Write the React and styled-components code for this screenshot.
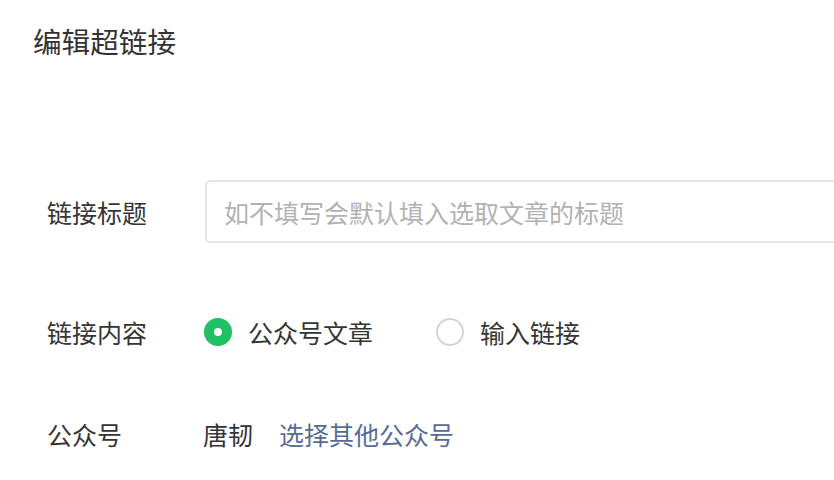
import React from 'react';
import styled, { createGlobalStyle } from 'styled-components';

const GlobalStyle = createGlobalStyle`
  html, body {
    margin: 0;
    padding: 0;
    background: #fff;
    overflow: hidden;
  }
  body {
    font-family: "Noto Sans CJK SC", "Noto Sans", sans-serif;
    color: #353535;
  }
`;

const Page = styled.div`
  width: 834px;
  height: 480px;
  padding: 21px 0 0 33px;
  box-sizing: border-box;
  overflow: hidden;
`;

const Title = styled.h1`
  margin: 0;
  font-size: 28.6px;
  line-height: 40px;
  font-weight: 400;
  color: #333;
`;

const Form = styled.div`
  margin-top: 119px;
  padding-left: 14px;
  display: flex;
  flex-direction: column;
`;

const Row = styled.div`
  display: flex;
  align-items: center;
  height: 63px;
  margin-bottom: ${p => p.$spacing || 0}px;
`;

const Label = styled.div`
  width: 156px;
  flex-shrink: 0;
  font-size: 25px;
  line-height: 36px;
  color: #353535;
`;

const Field = styled.div`
  display: flex;
  align-items: center;
  flex-shrink: 0;
`;

const Input = styled.input`
  width: 700px;
  height: 63px;
  margin-left: 2px;
  box-sizing: border-box;
  border: 2px solid #e4e6ea;
  border-radius: 5px;
  padding: 0 17px;
  font-family: inherit;
  font-size: 25px;
  color: #353535;
  outline: none;
  background: #fff;

  &::placeholder {
    color: #b2b2b2;
  }
`;

const RadioOption = styled.label`
  display: flex;
  align-items: center;
  gap: 16px;
  margin-right: 62px;
  margin-left: 1px;
  font-size: 25px;
  line-height: 36px;
  color: #353535;
  cursor: pointer;
`;

const RadioDot = styled.span`
  width: 28px;
  height: 28px;
  border-radius: 50%;
  box-sizing: border-box;
  border: ${p => (p.$checked ? '10px solid #1fc163' : '2px solid #d3d5da')};
  background: #fff;
  flex-shrink: 0;
`;

const Value = styled.span`
  font-size: 25px;
  line-height: 36px;
  color: #353535;
  margin-right: 26px;
`;

const Link = styled.a`
  font-size: 25px;
  line-height: 36px;
  color: #576b95;
  text-decoration: none;
  cursor: pointer;
`;

export default function App() {
  return (
    <Page>
      <GlobalStyle />
      <Title>编辑超链接</Title>
      <Form>
        <Row $spacing={57}>
          <Label>链接标题</Label>
          <Field>
            <Input placeholder="如不填写会默认填入选取文章的标题" />
          </Field>
        </Row>
        <Row $spacing={39}>
          <Label>链接内容</Label>
          <Field>
            <RadioOption>
              <RadioDot $checked />
              公众号文章
            </RadioOption>
            <RadioOption>
              <RadioDot />
              输入链接
            </RadioOption>
          </Field>
        </Row>
        <Row>
          <Label>公众号</Label>
          <Field>
            <Value>唐韧</Value>
            <Link>选择其他公众号</Link>
          </Field>
        </Row>
      </Form>
    </Page>
  );
}
